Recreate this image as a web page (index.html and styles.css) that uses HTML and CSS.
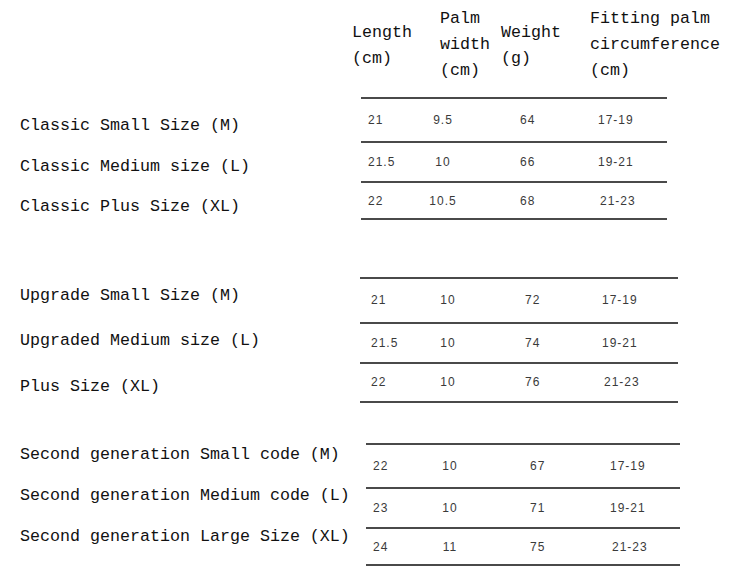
FILE: index.html
```html
<!DOCTYPE html>
<html lang="en">
<head>
<meta charset="utf-8">
<title>Size chart</title>
<link rel="stylesheet" href="styles.css">
</head>
<body>
<div class="page">
  <div class="head">
    <div class="hcol hcol-low">Length<br>(cm)</div>
    <div class="hcol">Palm<br>width<br>(cm)</div>
    <div class="hcol hcol-low">Weight<br>(g)</div>
    <div class="hcol">Fitting palm<br>circumference<br>(cm)</div>
  </div>

  <section class="sec sec-1">
    <div class="labels">
      <div>Classic Small Size (M)</div>
      <div>Classic Medium size (L)</div>
      <div>Classic Plus Size (XL)</div>
    </div>
    <div class="tbl">
      <div class="row"><span>21</span><span class="c2">9.5</span><span class="c3">64</span><span>17-19</span></div>
      <div class="row"><span>21.5</span><span class="c2">10</span><span class="c3">66</span><span>19-21</span></div>
      <div class="row"><span>22</span><span class="c2">10.5</span><span class="c3">68</span><span class="nudge">21-23</span></div>
    </div>
  </section>

  <section class="sec sec-2">
    <div class="labels">
      <div>Upgrade Small Size (M)</div>
      <div>Upgraded Medium size (L)</div>
      <div>Plus Size (XL)</div>
    </div>
    <div class="tbl">
      <div class="row"><span>21</span><span class="c2">10</span><span class="c3">72</span><span>17-19</span></div>
      <div class="row"><span>21.5</span><span class="c2">10</span><span class="c3">74</span><span>19-21</span></div>
      <div class="row"><span>22</span><span class="c2">10</span><span class="c3">76</span><span class="nudge">21-23</span></div>
    </div>
  </section>

  <section class="sec sec-3">
    <div class="labels">
      <div>Second generation Small code (M)</div>
      <div>Second generation Medium code (L)</div>
      <div>Second generation Large Size (XL)</div>
    </div>
    <div class="tbl">
      <div class="row"><span>22</span><span class="c2">10</span><span class="c3">67</span><span>17-19</span></div>
      <div class="row"><span>23</span><span class="c2">10</span><span class="c3">71</span><span>19-21</span></div>
      <div class="row"><span>24</span><span class="c2">11</span><span class="c3">75</span><span class="nudge">21-23</span></div>
    </div>
  </section>
</div>
</body>
</html>
```

FILE: styles.css
```css
* { box-sizing: border-box; }

html, body {
  margin: 0;
  padding: 0;
  background: #ffffff;
}

.page {
  width: 747px;
  height: 582px;
  overflow: hidden;
  font-family: "Liberation Mono", "DejaVu Sans Mono", monospace;
  font-size: 16.67px;
  color: #111;
}

/* header */
.head {
  height: 97px;
  display: grid;
  grid-template-columns: 88px 61px 89px auto;
  padding-left: 352px;
  align-items: start;
}

.hcol {
  line-height: 26px;
  padding-top: 6px;
  white-space: nowrap;
}

.hcol-low {
  padding-top: 20px;
}

/* sections */
.sec {
  display: flex;
  align-items: flex-start;
}

.labels {
  width: var(--lw);
  padding-left: 20px;
  padding-top: var(--lpad);
  line-height: var(--lh);
  white-space: nowrap;
}

.tbl {
  width: var(--tw);
  margin-top: var(--tpad);
  border-top: 2px solid #4a4a4a;
  font-family: "Liberation Sans", Arial, sans-serif;
  font-size: 12px;
  letter-spacing: 1px;
  color: #3a3a3a;
}

.row {
  display: grid;
  grid-template-columns: var(--c1) 50px var(--c3) 1fr;
  align-items: center;
  padding-left: var(--p);
  border-bottom: 2px solid #4a4a4a;
  height: 40px;
}

.row:nth-child(1) { height: var(--r1); }
.row:nth-child(2) { height: var(--r2); }
.row:nth-child(3) { height: var(--r3); }

.c2 { text-align: center; }
.c3 { padding-left: var(--c3pad); }
.nudge { padding-left: 2px; }

.sec-1 {
  --lw: 361px;
  --lpad: 9px;
  --lh: 40.5px;
  --tw: 306px;
  --tpad: 0px;
  --p: 7px;
  --c1: 50px;
  --c3: 130px;
  --c3pad: 52px;
  --r1: 44px;
  --r2: 40px;
  --r3: 37px;
}

.sec-2 {
  margin-top: 45px;
  --lw: 360px;
  --lpad: 0px;
  --lh: 45.5px;
  --tw: 318px;
  --tpad: 4px;
  --p: 11px;
  --c1: 52px;
  --c3: 129px;
  --c3pad: 52px;
  --r1: 45px;
  --r2: 40px;
  --r3: 39px;
}

.sec-3 {
  margin-top: 25px;
  --lw: 366px;
  --lpad: 0px;
  --lh: 41px;
  --tw: 314px;
  --tpad: 9px;
  --p: 7px;
  --c1: 52px;
  --c3: 135px;
  --c3pad: 55px;
  --r1: 44px;
  --r2: 40px;
  --r3: 37px;
}
```
